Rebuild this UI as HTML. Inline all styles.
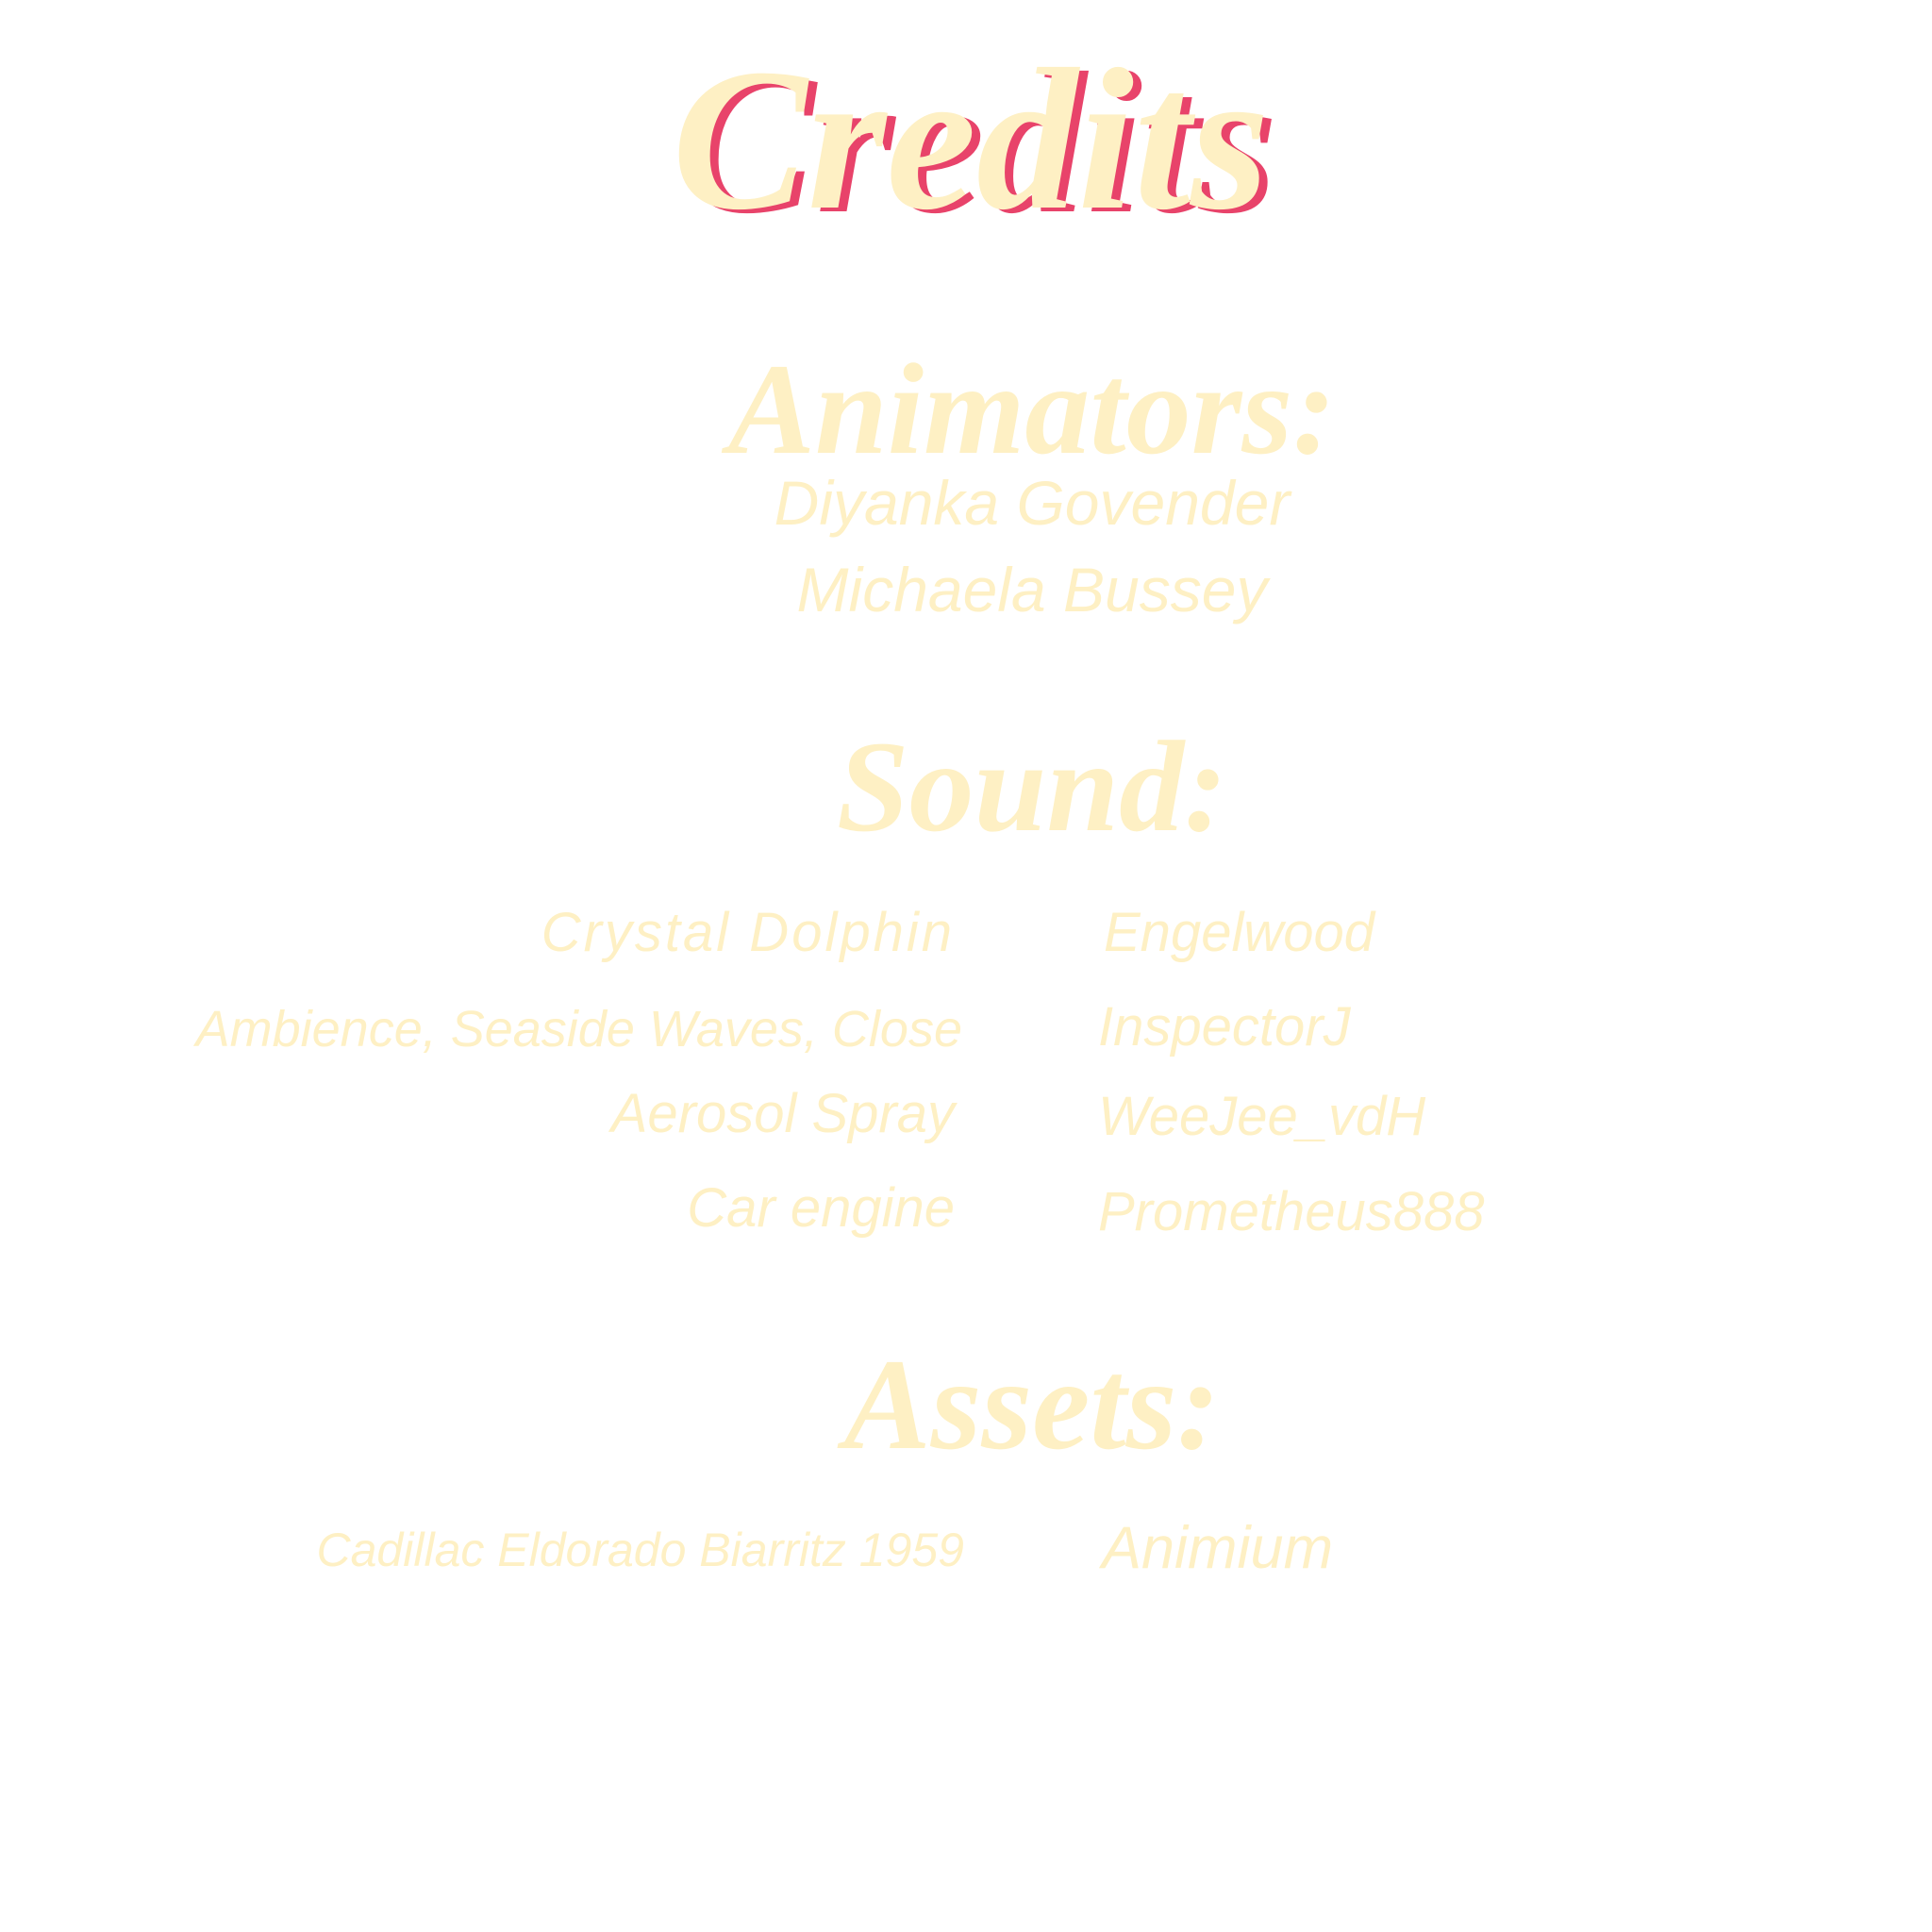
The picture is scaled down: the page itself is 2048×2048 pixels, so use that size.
<!DOCTYPE html>
<html><head><meta charset="utf-8"><style>
html,body{margin:0;padding:0;background:#fff;}
body{width:2048px;height:2048px;position:relative;overflow:hidden;}
.t{position:absolute;white-space:nowrap;color:#FEF0C4;}
.h{font-family:"Liberation Serif",serif;font-style:italic;font-weight:bold;}
.n{font-family:"Liberation Sans",sans-serif;font-style:italic;font-size:58px;line-height:1;}
.r{text-align:right;}
</style></head><body>
<div class="t h" style="left:0;width:2048px;text-align:center;top:40px;font-size:215px;line-height:1;padding-left:10px;box-sizing:border-box;text-shadow:9px 4px 0 #E8436A;">Credits</div>
<div class="t h" style="left:0;width:2048px;text-align:center;top:365px;font-size:138px;line-height:1;padding-left:140px;box-sizing:border-box;">Animators:</div>
<div class="t n" style="left:0;width:2048px;text-align:center;top:500px;font-size:66px;padding-left:140px;box-sizing:border-box;">Diyanka Govender</div>
<div class="t n" style="left:0;width:2048px;text-align:center;top:592px;font-size:66px;padding-left:140px;box-sizing:border-box;">Michaela Bussey</div>
<div class="t h" style="left:0;width:2048px;text-align:center;top:765px;font-size:138px;line-height:1;padding-left:140px;box-sizing:border-box;">Sound:</div>

<div class="t n r" style="right:1036px;top:960px;letter-spacing:3px;">Crystal Dolphin</div>
<div class="t n r" style="right:1028px;top:1064px;font-size:54px;">Ambience, Seaside Waves, Close</div>
<div class="t n r" style="right:1036px;top:1152px;">Aerosol Spray</div>
<div class="t n r" style="right:1036px;top:1252px;">Car engine</div>

<div class="t n" style="left:1170px;top:960px;">Engelwood</div>
<div class="t n" style="left:1164px;top:1060px;">InspectorJ</div>
<div class="t n" style="left:1164px;top:1155px;">WeeJee_vdH</div>
<div class="t n" style="left:1164px;top:1256px;">Prometheus888</div>

<div class="t h" style="left:0;width:2048px;text-align:center;top:1420px;font-size:138px;line-height:1;padding-left:140px;box-sizing:border-box;">Assets:</div>
<div class="t n r" style="right:1026px;top:1618px;font-size:50px;">Cadillac Eldorado Biarritz 1959</div>
<div class="t n" style="left:1168px;top:1610px;font-size:63px;">Animium</div>
</body></html>
